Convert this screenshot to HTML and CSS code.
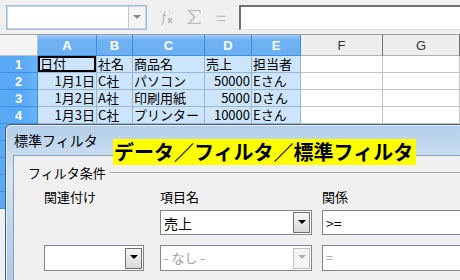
FILE: index.html
```html
<!DOCTYPE html>
<html lang="ja">
<head>
<meta charset="utf-8">
<link rel="stylesheet" href="styles.css">
</head>
<body>
<div class="app">
  <div class="toolbar">
    <div class="namebox">
      <div class="namebox-field"></div>
      <div class="namebox-btn"><span class="tri"></span></div>
    </div>
    <div class="tb-icons">
      <svg class="ic-fx" width="18" height="18" viewBox="0 0 18 18">
        <path d="M8 3.5c-1.2 0-1.6 1-1.8 2.2L5 14.5c-.2 1.2-.8 1.8-1.8 1.8" fill="none" stroke="#b8b8b8" stroke-width="1.2"/>
        <path d="M4.5 7.5h4" stroke="#b8b8b8" stroke-width="1.1"/>
        <path d="M10 10l4 5M14 10l-4 5" stroke="#b0b0b0" stroke-width="1.3"/>
        <circle cx="3" cy="3" r=".7" fill="#c8c8c8"/><circle cx="12" cy="2.5" r=".7" fill="#c8c8c8"/><circle cx="15" cy="5" r=".7" fill="#c8c8c8"/><circle cx="11" cy="6" r=".6" fill="#c8c8c8"/>
      </svg>
      <svg class="ic-sum" width="16" height="16" viewBox="0 0 16 16">
        <path d="M14 3.5V1.5H2.5l6 6.5-6 6.5H14v-2" fill="none" stroke="#b8b8b8" stroke-width="1.2"/>
        <path d="M4.5 2.5l5.3 5.5-5.3 5.5" fill="none" stroke="#d0d0d0" stroke-width="1"/>
      </svg>
      <span class="ic-eq">=</span>
    </div>
    <div class="inputline"></div>
  </div>

  <div class="sheet">
    <div class="corner"></div>
    <div class="ch sel">A</div><div class="ch sel">B</div><div class="ch sel">C</div><div class="ch sel">D</div><div class="ch sel">E</div><div class="ch">F</div><div class="ch">G</div>

    <div class="rh">1</div>
    <div class="c s cur">日付</div><div class="c s">社名</div><div class="c s">商品名</div><div class="c s">売上</div><div class="c s">担当者</div><div class="c"></div><div class="c"></div>

    <div class="rh">2</div>
    <div class="c s r">1月1日</div><div class="c s">C社</div><div class="c s">パソコン</div><div class="c s r">50000</div><div class="c s">Eさん</div><div class="c"></div><div class="c"></div>

    <div class="rh">3</div>
    <div class="c s r">1月2日</div><div class="c s">A社</div><div class="c s">印刷用紙</div><div class="c s r">5000</div><div class="c s">Dさん</div><div class="c"></div><div class="c"></div>

    <div class="rh">4</div>
    <div class="c s r">1月3日</div><div class="c s">C社</div><div class="c s">プリンター</div><div class="c s r">10000</div><div class="c s">Eさん</div><div class="c"></div><div class="c"></div>

    <div class="rh"></div>
    <div class="c s"></div><div class="c s"></div><div class="c s"></div><div class="c s"></div><div class="c s"></div><div class="c"></div><div class="c"></div>
    <div class="rh"></div>
    <div class="c s"></div><div class="c s"></div><div class="c s"></div><div class="c s"></div><div class="c s"></div><div class="c"></div><div class="c"></div>
    <div class="rh"></div>
    <div class="c s"></div><div class="c s"></div><div class="c s"></div><div class="c s"></div><div class="c s"></div><div class="c"></div><div class="c"></div>
    <div class="rh"></div>
    <div class="c s"></div><div class="c s"></div><div class="c s"></div><div class="c s"></div><div class="c s"></div><div class="c"></div><div class="c"></div>
    <div class="rh"></div>
    <div class="c s"></div><div class="c s"></div><div class="c s"></div><div class="c s"></div><div class="c s"></div><div class="c"></div><div class="c"></div>
  </div>

  <div class="dialog">
    <div class="titlebar">標準フィルタ</div>
    <div class="client">
      <div class="group-title"><span>フィルタ条件</span><span class="rule"></span></div>
      <div class="form">
        <div class="lbl">関連付け</div>
        <div class="lbl">項目名</div>
        <div class="lbl">関係</div>

        <div></div>
        <div class="box combo"><span class="val">売上</span><span class="dbtn"><span class="tri"></span></span></div>
        <div class="box"><span class="val">&gt;=</span></div>

        <div class="box combo"><span class="val"></span><span class="dbtn"><span class="tri"></span></span></div>
        <div class="box combo dis"><span class="val">- なし -</span><span class="dbtn"><span class="tri"></span></span></div>
        <div class="box dis"><span class="val">=</span></div>
      </div>
    </div>
  </div>

  <div class="note">データ／フィルタ／標準フィルタ</div>
</div>
</body>
</html>
```

FILE: styles.css
```css
* { box-sizing: border-box; }
html, body { margin: 0; padding: 0; }
body {
  width: 460px;
  height: 280px;
  overflow: hidden;
  background: #f0f0f0;
  font-family: "Noto Sans CJK JP", "Noto Sans", sans-serif;
  font-size: 13px;
  color: #000;
}
.app { position: relative; width: 460px; height: 280px; overflow: hidden; }

/* toolbar */
.toolbar {
  height: 34px;
  display: flex;
  align-items: center;
  padding-left: 6px;
  background: #f0f0f0;
}
.namebox {
  width: 141px;
  height: 25px;
  display: flex;
  border: 1px solid #a1bad6;
  background: #fff;
  padding: 1px;
  box-shadow: inset 0 0 0 1px #c6d7ea;
}
.namebox-field { flex: 1; }
.namebox-btn {
  width: 17px;
  border-left: 1px solid #c8c8c8;
  background: #f4f4f4;
  display: flex;
  align-items: center;
  justify-content: center;
}
.tri {
  width: 0; height: 0;
  border-left: 4px solid transparent;
  border-right: 4px solid transparent;
  border-top: 4px solid #404040;
}
.namebox-btn .tri { border-top-color: #8a8a8a; }
.tb-icons {
  display: flex;
  align-items: center;
  gap: 8px;
  margin-left: 11px;
  width: 77px;
}
.ic-sum { margin-left: 2px; }
.ic-eq { color: #c0c0c0; font-size: 18px; line-height: 1; margin-left: 6px; }
.inputline {
  flex: 1;
  height: 25px;
  margin-left: 4px;
  background: #fff;
  border-top: 2px solid #707070;
  border-left: 2px solid #707070;
  border-bottom: 1px solid #e0e0e0;
}

/* sheet */
.sheet {
  display: grid;
  grid-template-columns: 38px 59px 36px 72px 47px 49px 82px 1fr;
  grid-template-rows: 21px;
  grid-auto-rows: 17px;
  border-top: 1px solid #a0a0a0;
  background: #fff;
}
.corner { background: #f4f4f4; border-right: 1px solid #c0c0c0; border-bottom: 1px solid #c0c0c0; }
.ch {
  display: flex; align-items: center; justify-content: center;
  background: #eeeeee;
  border-right: 1px solid #707070;
  border-bottom: 1px solid #b0b0b0;
  font-family: "Liberation Sans", sans-serif;
  font-size: 13px;
  color: #333;
}
.ch.sel {
  background: linear-gradient(#9ccaf8 0, #6fb2f4 5px, #6cb0f2 100%);
  border-right: 1px solid #3b8ee0;
  border-bottom: 1px solid #3f8fe0;
  color: #fff;
  font-weight: bold;
}
.rh {
  display: flex; align-items: center; justify-content: center;
  background: linear-gradient(90deg, #5aaaf6, #58a9f6 20px, #6ab3f6);
  border-right: 1px solid #3b8ee0;
  border-bottom: 1px solid #3f8fe0;
  color: #fff;
  font-weight: bold;
  font-family: "Liberation Sans", sans-serif;
  font-size: 13px;
}
.c {
  border-right: 1px solid #c4c4c4;
  border-bottom: 1px solid #c4c4c4;
  background: #fff;
  font-size: 13px;
  line-height: 16px;
  padding: 0 1px;
  white-space: nowrap;
}
.c.s { background: #cde5fb; border-color: #9ab5d6; }
.c.r { text-align: right; }
.c.cur { box-shadow: inset 0 0 0 2px #000; padding-left: 2px; }

/* dialog */
.dialog {
  position: absolute;
  left: 5px;
  top: 124px;
  width: 480px;
  height: 170px;
  border: 1px solid #4b5f78;
  border-radius: 6px 6px 0 0;
  background: linear-gradient(180deg, #b4cfea 0%, #d6e6f5 30%, #bcd5ee 60%, #a9c8e8 100%);
  padding: 0 0 0 7px;
  box-shadow: inset 1px 1px 0 #e6f0fa;
}
.titlebar {
  height: 30px;
  padding: 4px 0 0 1px;
  font-size: 14px;
  line-height: 22px;
  color: #000;
}
.client {
  background: #f0f0f0;
  border: 1px solid #8a9fb8;
  height: 140px;
  padding: 8px 0 0 14px;
}
.group-title {
  display: flex;
  align-items: center;
  gap: 4px;
  font-size: 13px;
  line-height: 18px;
  color: #000;
}
.group-title .rule {
  flex: 1;
  height: 2px;
  border-top: 1px solid #a0a0a0;
  border-bottom: 1px solid #fff;
}
.form {
  display: grid;
  grid-template-columns: 100px 152px 1fr;
  grid-template-rows: 19px 25px 26px;
  column-gap: 16px;
  row-gap: 0;
  margin: 7px 0 0 16px;
}
.form .lbl { font-size: 13px; line-height: 16px; color: #000; }
.form .lbl:nth-child(3) { margin-left: -6px; }
.box {
  display: flex;
  align-items: center;
  background: #fff;
  border: 1px solid #82878f;
}
.form > :nth-child(n+4):nth-child(-n+6) { margin-top: 2px; height: 25px; }
.form > :nth-child(n+7) { margin-top: 12px; height: 26px; }
.form > .box:nth-child(3n) { margin-left: -6px; }
.box .val { flex: 1; padding-left: 3px; font-size: 14px; line-height: 16px; white-space: nowrap; }
.dbtn {
  width: 17px;
  height: 21px;
  margin-right: 1px;
  border: 1px solid #707070;
  background: linear-gradient(#f6f6f6, #d9d9d9);
  display: flex;
  align-items: center;
  justify-content: center;
}
.dbtn .tri { border-top-color: #000; margin-top: -2px; }
.box.dis .val { color: #a0a0a0; font-size: 13px; }
.box.dis .dbtn { border-color: #c0c0c0; background: #f4f4f4; }
.box.dis .dbtn .tri { border-top-color: #b0b0b0; }

/* annotation */
.note {
  position: absolute;
  left: 113px;
  top: 139px;
  height: 26px;
  padding: 0 3px 0 1px;
  background: #ffff00;
  font-weight: bold;
  font-size: 20px;
  line-height: 26px;
  white-space: nowrap;
  color: #000;
}
```
